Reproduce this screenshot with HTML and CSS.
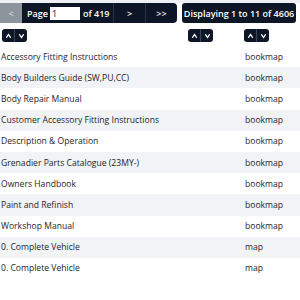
FILE: index.html
```html
<!DOCTYPE html>
<html lang="en">
<head>
    <meta charset="UTF-8">
    <meta name="viewport" content="width=device-width, initial-scale=1.0">
    <title>Publications</title>
    <link rel="stylesheet" href="styles.css">
</head>
<body>
    <div class="pager">
        <div class="pager-nav">
            <button class="pg-btn pg-prev" disabled>&lt;</button>
            <div class="pg-page">Page <input type="text" class="pg-input" value="1"> of 419</div>
            <button class="pg-btn">&gt;</button>
            <button class="pg-btn pg-last">&gt;&gt;</button>
        </div>
        <div class="pg-info">Displaying 1 to 11 of 4606</div>
    </div>

    <table class="results">
        <colgroup>
            <col class="col-title">
            <col class="col-mid">
            <col class="col-type">
        </colgroup>
        <thead>
            <tr>
                <th><span class="sorter"><span class="sort-half"><svg viewBox="0 0 8 6"><polyline points="1.5,5 4,1.2 6.5,5"/></svg></span><span class="sort-half"><svg viewBox="0 0 8 6"><polyline points="1.5,1 4,4.8 6.5,1"/></svg></span></span></th>
                <th><span class="sorter"><span class="sort-half"><svg viewBox="0 0 8 6"><polyline points="1.5,5 4,1.2 6.5,5"/></svg></span><span class="sort-half"><svg viewBox="0 0 8 6"><polyline points="1.5,1 4,4.8 6.5,1"/></svg></span></span></th>
                <th><span class="sorter"><span class="sort-half"><svg viewBox="0 0 8 6"><polyline points="1.5,5 4,1.2 6.5,5"/></svg></span><span class="sort-half"><svg viewBox="0 0 8 6"><polyline points="1.5,1 4,4.8 6.5,1"/></svg></span></span></th>
            </tr>
        </thead>
        <tbody>
            <tr><td>Accessory Fitting Instructions</td><td></td><td>bookmap</td></tr>
            <tr><td>Body Builders Guide (SW,PU,CC)</td><td></td><td>bookmap</td></tr>
            <tr><td>Body Repair Manual</td><td></td><td>bookmap</td></tr>
            <tr><td>Customer Accessory Fitting Instructions</td><td></td><td>bookmap</td></tr>
            <tr><td>Description &amp; Operation</td><td></td><td>bookmap</td></tr>
            <tr><td>Grenadier Parts Catalogue (23MY-)</td><td></td><td>bookmap</td></tr>
            <tr><td>Owners Handbook</td><td></td><td>bookmap</td></tr>
            <tr><td>Paint and Refinish</td><td></td><td>bookmap</td></tr>
            <tr><td>Workshop Manual</td><td></td><td>bookmap</td></tr>
            <tr><td>0. Complete Vehicle</td><td></td><td>map</td></tr>
            <tr><td>0. Complete Vehicle</td><td></td><td>map</td></tr>
        </tbody>
    </table>
</body>
</html>
```

FILE: styles.css
```css
body {
    margin: 0;
    font-family: "Open Sans", "Noto Sans", Arial, sans-serif;
    font-size: 8.6px;
    color: #1f2328;
    background: #fff;
    border-top: 3px solid #eef0f3;
}
.pager {
    display: flex;
    gap: 5px;
    height: 20px;
    padding-right: 4px;
}
.pager-nav {
    display: flex;
    flex: none;
    background: #0d1626;
    border-radius: 0 4px 4px 0;
}
.pg-btn {
    border: 0;
    background: transparent;
    color: #fff;
    font-family: inherit;
    font-size: 9px;
    font-weight: 600;
    width: 32px;
    padding: 0;
    border-left: 1px solid #2a3446;
}
.pg-prev {
    width: 22px;
    border-left: 0;
    background: #8e949c;
    color: #d7dade;
}
.pg-page {
    display: flex;
    align-items: center;
    gap: 2px;
    padding-left: 5px;
    box-sizing: border-box;
    width: 91px;
    color: #fff;
    font-size: 9px;
    font-weight: 600;
    white-space: nowrap;
}
.pg-input {
    width: 30px;
    height: 13px;
    border: 0;
    margin-right: 1px;
    padding: 0 2px;
    box-sizing: border-box;
    font-family: inherit;
    font-size: 9px;
    color: #111;
}
.pg-info {
    flex: 1;
    display: flex;
    align-items: center;
    justify-content: center;
    background: #0d1626;
    color: #fff;
    font-size: 9px;
    font-weight: 600;
    white-space: nowrap;
    border-radius: 3px;
}
.results {
    width: 300px;
    table-layout: fixed;
    border-collapse: collapse;
}
.col-title {
    width: 188px;
}
.col-mid {
    width: 56px;
}
.results th {
    text-align: left;
    padding: 6px 0 4px 2px;
    height: 13px;
}
.results th + th {
    padding-left: 0;
}
.results td {
    height: 21.2px;
    padding: 0 0 0 1px;
    font-weight: 500;
    white-space: nowrap;
}
.results tbody tr:nth-child(even) {
    background: #f1f3f6;
}
.sorter {
    display: inline-flex;
    height: 13px;
    background: #0d1626;
    border-radius: 3px;
    vertical-align: top;
}
.sort-half {
    width: 12px;
    display: flex;
    align-items: center;
    justify-content: center;
}
.sort-half + .sort-half {
    border-left: 1px solid #3a4458;
    width: 12px;
}
.sort-half svg {
    width: 7px;
    height: 6px;
    fill: none;
    stroke: #fff;
    stroke-width: 1.5;
}
```
